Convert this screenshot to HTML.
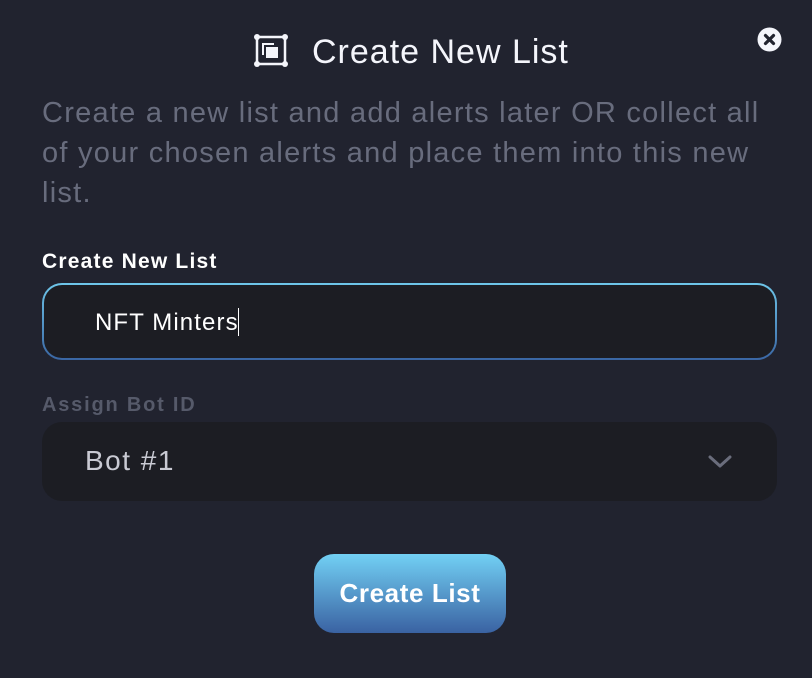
<!DOCTYPE html><html><head><style>
body{margin:0;width:812px;height:678px;background:#21232f;font-family:"Liberation Sans",sans-serif;position:relative;overflow:hidden}
.a{position:absolute;white-space:nowrap}
</style></head><body>
<svg class="a" style="left:254px;top:34px" width="36" height="34" viewBox="0 0 36 34"><rect x="3" y="3" width="28" height="27" fill="none" stroke="#f4f5fb" stroke-width="2.5"/><circle cx="3" cy="3" r="3" fill="#f4f5fb"/><circle cx="31" cy="3" r="3" fill="#f4f5fb"/><circle cx="3" cy="30" r="3" fill="#f4f5fb"/><circle cx="31" cy="30" r="3" fill="#f4f5fb"/><path d="M9 21V10h11" fill="none" stroke="#f4f5fb" stroke-width="2"/><rect x="12" y="13" width="12" height="11" fill="#f4f5fb"/></svg>
<div class="a" style="left:312px;top:33px;font-size:34px;letter-spacing:1px;color:#f4f5fb">Create New List</div>
<svg class="a" style="left:757px;top:27px" width="25" height="25" viewBox="0 0 25 25"><circle cx="12.5" cy="12.5" r="12" fill="#f4f5fb"/><path d="M8.5 8.5l8 8M16.5 8.5l-8 8" stroke="#21232f" stroke-width="3.2" stroke-linecap="round"/></svg>
<div class="a" style="left:42px;top:93px;font-size:29px;letter-spacing:1.25px;line-height:40px;color:#686c7d">Create a new list and add alerts later OR collect all<br>of your chosen alerts and place them into this new<br>list.</div>
<div class="a" style="left:42px;top:250px;font-size:21px;letter-spacing:1.2px;font-weight:bold;color:#fff">Create New List</div>
<div class="a" style="left:42px;top:283px;width:735px;height:77px;border-radius:20px;background:linear-gradient(#6ec6ea,#3a66a4);"></div>
<div class="a" style="left:44px;top:285px;width:731px;height:73px;border-radius:18px;background:#1c1d23"></div>
<div class="a" style="left:95px;top:308px;font-size:24px;letter-spacing:1.1px;color:#fff">NFT Minters<span style="display:inline-block;width:1.5px;height:28px;background:#fff;vertical-align:-6px;margin-left:-1px"></span></div>
<div class="a" style="left:42px;top:394px;font-size:20px;letter-spacing:1.8px;font-weight:bold;color:#565a6a">Assign Bot ID</div>
<div class="a" style="left:42px;top:422px;width:735px;height:79px;border-radius:20px;background:#1c1d23"></div>
<div class="a" style="left:85px;top:445px;font-size:28px;letter-spacing:1.5px;color:#c9cad3">Bot #1</div>
<svg class="a" style="left:708px;top:455px" width="24" height="14" viewBox="0 0 24 14"><path d="M2 2l10 9 10-9" fill="none" stroke="#6a6d7c" stroke-width="3" stroke-linecap="round" stroke-linejoin="round"/></svg>
<div class="a" style="left:314px;top:554px;width:192px;height:79px;border-radius:20px;background:linear-gradient(#72d0f4,#3a62a2);color:#fff;font-size:26px;letter-spacing:0.6px;font-weight:bold;text-align:center;line-height:79px">Create List</div>
</body></html>
